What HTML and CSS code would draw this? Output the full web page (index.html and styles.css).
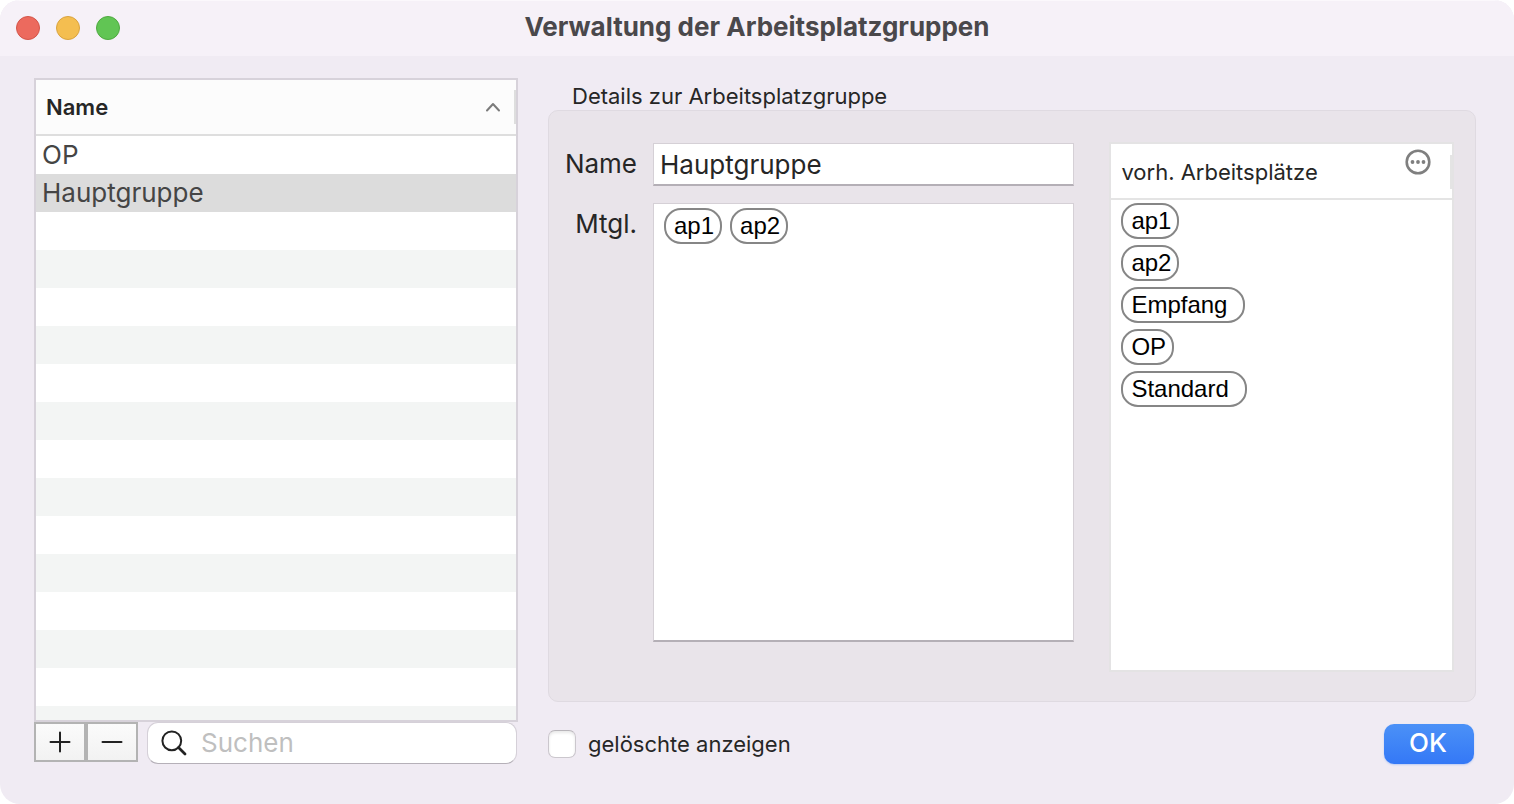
FILE: index.html
```html
<!DOCTYPE html>
<html lang="de">
<head>
<meta charset="utf-8">
<meta name="viewport" content="width=device-width, initial-scale=1">
<title>Verwaltung der Arbeitsplatzgruppen</title>
<link rel="stylesheet" href="styles.css">
</head>
<body>
<div class="window">
  <header class="titlebar">
    <div class="traffic">
      <button class="dot dot-close" type="button" aria-label="Schließen"></button>
      <button class="dot dot-min" type="button" aria-label="Minimieren"></button>
      <button class="dot dot-zoom" type="button" aria-label="Zoomen"></button>
    </div>
    <h1 class="title">Verwaltung der Arbeitsplatzgruppen</h1>
  </header>

  <main class="content">
    <section class="groups">
      <div class="group-list">
        <table class="group-table">
          <thead>
            <tr>
              <th scope="col" aria-sort="ascending">
                <button class="sort" type="button">
                  <span>Name</span>
                  <svg width="16" height="10" viewBox="0 0 16 10" aria-hidden="true"><path d="M2 8.500 8 2l6 6.500" fill="none" stroke="#7b7b7b" stroke-width="2" stroke-linecap="round" stroke-linejoin="round"/></svg>
                </button>
              </th>
            </tr>
          </thead>
          <tbody>
            <tr><td>OP</td></tr>
            <tr class="selected"><td>Hauptgruppe</td></tr>
          </tbody>
        </table>
        <div class="stripes"></div>
      </div>
      <div class="list-tools">
        <div class="add-remove">
          <button class="square" type="button" aria-label="Hinzufügen">
            <svg width="22" height="22" viewBox="0 0 22 22" aria-hidden="true"><path d="M11 1.500v19M1.500 11h19" fill="none" stroke="#222" stroke-width="2" stroke-linecap="round"/></svg>
          </button>
          <button class="square" type="button" aria-label="Entfernen">
            <svg width="22" height="22" viewBox="0 0 22 22" aria-hidden="true"><path d="M1.500 11h19" fill="none" stroke="#222" stroke-width="2" stroke-linecap="round"/></svg>
          </button>
        </div>
        <label class="search">
          <svg width="26" height="26" viewBox="0 0 26 26" aria-hidden="true"><circle cx="10.800" cy="10.800" r="9.400" fill="none" stroke="#222" stroke-width="2"/><path d="m17.500 17.500 6.500 6.500" stroke="#222" stroke-width="2.800" stroke-linecap="round"/></svg>
          <input class="search-input" type="search" placeholder="Suchen" aria-label="Suchen">
        </label>
      </div>
    </section>

    <section class="details">
      <h2 class="details-title" id="details-title">Details zur Arbeitsplatzgruppe</h2>
      <div class="panel" role="group" aria-labelledby="details-title">
        <div class="form">
          <label class="form-label" for="name">Name</label>
          <input class="field" id="name" type="text" value="Hauptgruppe">
          <span class="form-label" id="members">Mtgl.</span>
          <ul class="field members" aria-labelledby="members">
            <li class="chip">ap1</li>
            <li class="chip">ap2</li>
          </ul>
        </div>
        <div class="available">
          <div class="available-head">
            <span class="available-title" id="available-title">vorh. Arbeitsplätze</span>
            <button class="more" type="button" aria-label="Mehr">
              <svg width="26" height="26" viewBox="0 0 26 26" aria-hidden="true"><circle cx="13" cy="13" r="11.300" fill="none" stroke="#7f7f7f" stroke-width="2.600"/><g fill="#7f7f7f"><circle cx="7.500" cy="13" r="1.900"/><circle cx="13" cy="13" r="1.900"/><circle cx="18.500" cy="13" r="1.900"/></g></svg>
            </button>
          </div>
          <ul class="available-list" aria-labelledby="available-title">
            <li class="chip">ap1</li>
            <li class="chip">ap2</li>
            <li class="chip chip-wide">Empfang</li>
            <li class="chip">OP</li>
            <li class="chip chip-wide">Standard</li>
          </ul>
        </div>
      </div>
      <footer class="actions">
        <label class="deleted"><input class="check" type="checkbox">gelöschte anzeigen</label>
        <button class="ok" type="button">OK</button>
      </footer>
    </section>
  </main>
</div>
</body>
</html>
```

FILE: styles.css
```css
* { box-sizing: border-box; }

body {
  margin: 0;
  background: #fff;
  font-family: Inter, "Liberation Sans", sans-serif;
  color: #262626;
}

button, input { font: inherit; color: inherit; }
button { margin: 0; padding: 0; border: 0; background: none; }
ul { margin: 0; padding: 0; list-style: none; }
svg { display: block; }

.window {
  display: flex;
  flex-direction: column;
  min-height: 100vh;
  border-radius: 20px;
  overflow: hidden;
  background: #f0ebf3;
}

/* Title bar */
.titlebar {
  display: grid;
  grid-template-columns: 1fr auto 1fr;
  align-items: center;
  height: 56px;
  padding: 0 16px;
  background: #f6f1f8;
  box-shadow: inset 0 1px #fbf8fc;
}
.traffic { display: flex; gap: 16px; }
.dot { width: 24px; height: 24px; border: 1px solid; border-radius: 50%; }
.dot-close { background: #ec6a5e; border-color: #d35549; }
.dot-min { background: #f4be50; border-color: #d9a33f; }
.dot-zoom { background: #61c554; border-color: #4fa940; }
.title {
  margin: 0;
  font-size: 26px;
  line-height: 54px;
  font-weight: 700;
  color: #4a484b;
  align-self: start;
}

.content {
  flex: 1;
  display: grid;
  grid-template-columns: 484fr 928fr;
  gap: 30px;
  padding: 22px 38px 40px 34px;
}

/* Group list */
.groups { display: flex; flex-direction: column; min-width: 0; }
.group-list {
  flex: 1;
  display: flex;
  flex-direction: column;
  border: 2px solid #d7d2da;
  background: #fff;
}
.group-table { width: 100%; border-collapse: separate; border-spacing: 0; }
.group-table th {
  height: 56px;
  padding: 0;
  background: #fcfcfc;
  border-bottom: 2px solid #dedede;
}
.sort {
  display: flex;
  align-items: center;
  justify-content: space-between;
  width: 100%;
  height: 34px;
  padding: 0 13px 0 10px;
  border-right: 2px solid #dedede;
  font-size: 22px;
  line-height: 34px;
  font-weight: 600;
}
.group-table td {
  height: 38px;
  padding: 0 6px;
  font-size: 26px;
  line-height: 38px;
  color: #454545;
}
.selected { background: #dcdcdc; }
.stripes {
  flex: 1;
  background: repeating-linear-gradient(#fff 0 38px, #f3f5f4 38px 76px);
}

.list-tools { display: flex; gap: 9px; padding-right: 1px; }
.add-remove { display: flex; height: 40px; }
.square {
  display: grid;
  place-items: center;
  width: 52px;
  border: 2px solid #b3b3b3;
  background: linear-gradient(#fbfbfb, #f2f2f2);
}
.search {
  flex: 1;
  display: flex;
  align-items: center;
  gap: 12px;
  min-width: 0;
  height: 42px;
  padding: 0 13px;
  border: 1px solid #d5d0d8;
  border-bottom-color: #b5b0b8;
  border-radius: 11px;
  background: #fff;
}
.search-input {
  flex: 1;
  min-width: 0;
  padding: 0 2px;
  border: 0;
  outline: 0;
  background: none;
  font-size: 26px;
  line-height: 38px;
}
.search-input::placeholder { color: #bfbfbf; }

/* Details */
.details { display: flex; flex-direction: column; min-width: 0; }
.details-title {
  height: 32px;
  margin: 0;
  padding: 2px 0 0 24px;
  font-size: 22px;
  line-height: 32px;
  font-weight: 400;
}
.panel {
  flex: 1;
  display: grid;
  grid-template-columns: 526fr 345fr;
  gap: 35px;
  padding: 31px 21px 29px 0;
  border: 1px solid #dfdae1;
  border-radius: 10px;
  background: #e9e4ea;
}
.form {
  display: grid;
  grid-template-columns: 88px 1fr;
  grid-template-rows: 43px 1fr;
  gap: 17px 16px;
  padding: 1px 0 30px;
}
.form-label {
  font-size: 26px;
  line-height: 42px;
  text-align: right;
}
.field {
  width: 100%;
  min-width: 0;
  border: 1px solid #d5d0d6;
  border-bottom: 2px solid #b4afb6;
  background: #fff;
  font-size: 26px;
}
input.field { padding: 0 6px; outline: 0; }
.members {
  display: flex;
  align-items: flex-start;
  align-content: flex-start;
  flex-wrap: wrap;
  gap: 8px;
  padding: 4px 10px;
}
.chip {
  height: 36px;
  padding: 0 6px 0 8px;
  border: 2px solid #868686;
  border-radius: 17px;
  background: #fff;
  font-family: "Liberation Sans", Arial, sans-serif;
  font-size: 24px;
  line-height: 32px;
  color: #000;
}
.chip-wide { padding-right: 16px; }

.available {
  display: flex;
  flex-direction: column;
  border: 2px solid #e4e3e4;
  background: #fff;
}
.available-head {
  display: flex;
  justify-content: space-between;
  height: 56px;
  padding-left: 10px;
  border-bottom: 2px solid #e4e4e4;
}
.available-title { font-size: 22px; line-height: 56px; }
.more {
  display: flex;
  align-items: flex-start;
  width: 47px;
  height: 34px;
  margin-top: 11px;
  border-right: 2px solid #e4e4e4;
}
.more svg { margin-top: -6px; }
.available-list {
  display: flex;
  flex-direction: column;
  align-items: flex-start;
  gap: 6px;
  padding: 3px 10px;
}

.actions {
  display: flex;
  align-items: center;
  justify-content: space-between;
  height: 40px;
  margin-top: 22px;
  padding-right: 2px;
}
.deleted {
  display: flex;
  align-items: center;
  gap: 12px;
  font-size: 22px;
  line-height: 32px;
}
.check {
  appearance: none;
  width: 28px;
  height: 28px;
  margin: 0;
  border: 1px solid #cbc7cd;
  border-top-color: #b8b5ba;
  border-radius: 7px;
  background: #fff;
  box-shadow: inset 0 2px 3px #e9e9e9;
}
.ok {
  width: 90px;
  height: 40px;
  padding: 0 2px 2px 0;
  border-radius: 10px;
  background: linear-gradient(#4b91f7, #3478f6);
  box-shadow: 0 1px 2px #b9cbf3;
  font-size: 26px;
  line-height: 38px;
  font-weight: 500;
  color: #fff;
}
```
